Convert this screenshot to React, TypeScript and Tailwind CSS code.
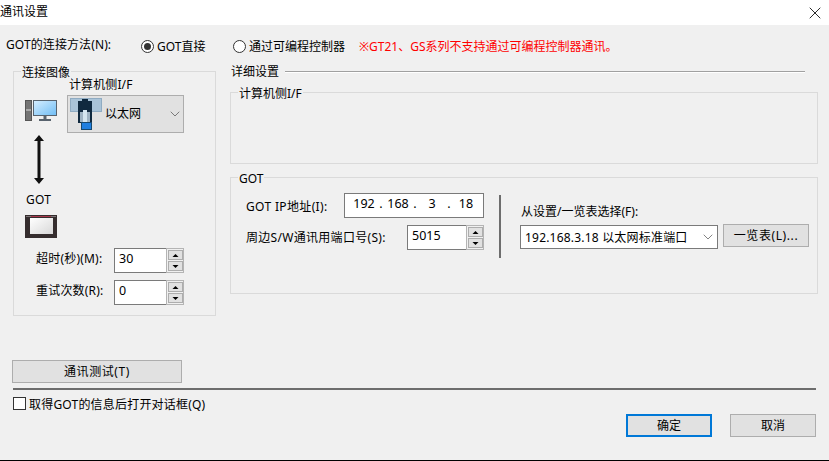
import { ChevronDown, X } from 'lucide-react'

function Radio({ checked }: { checked?: boolean }) {
  return (
    <span className="w-[13px] h-[13px] rounded-full border border-[#333333] bg-white flex items-center justify-center shrink-0">
      {checked && <span className="w-[7px] h-[7px] rounded-full bg-[#333333]" />}
    </span>
  )
}

function Group({ label, className, children }: { label: string; className: string; children?: React.ReactNode }) {
  return (
    <div className={`relative border border-[#dadada] ${className}`}>
      <span className="absolute left-[7px] top-[-6px] px-[1px] bg-[#f0f0f0] leading-[14px]">{label}</span>
      {children}
    </div>
  )
}

function Arrow({ up }: { up?: boolean }) {
  return (
    <svg width="9" height="5" viewBox="0 0 9 5">
      <path d={up ? 'M4.5 1L7.5 4H1.5Z' : 'M1.5 1H7.5L4.5 4Z'} fill="#000" />
    </svg>
  )
}

function Spin({ value, width }: { value: string; width: string }) {
  return (
    <div className={`flex h-[25px] shrink-0 ${width}`}>
      <div className="flex-1 bg-white border border-[#7a7a7a] border-r-0 pl-[4px] leading-[19px] text-[12.5px]">{value}</div>
      <div className="w-[18px] border border-[#b4b4b4] flex flex-col items-center justify-center gap-[1px]">
        <div className="w-[15px] h-[10px] bg-[#e1e1e1] border border-[#adadad] flex items-center justify-center"><Arrow up /></div>
        <div className="w-[15px] h-[10px] bg-[#e1e1e1] border border-[#adadad] flex items-center justify-center"><Arrow /></div>
      </div>
    </div>
  )
}

function Button({ children, className }: { children: React.ReactNode; className: string }) {
  return (
    <div className={`h-[23px] bg-[#e1e1e1] border border-[#adadad] flex items-center justify-center ${className}`}>
      {children}
    </div>
  )
}

function PcIcon() {
  return (
    <svg width="33" height="22" viewBox="0 0 33 22" className="block">
      <rect x="0.5" y="0.5" width="6" height="20" fill="#747474" stroke="#555" />
      <rect x="1" y="9.5" width="5" height="1" fill="#ddd" />
      <defs>
        <linearGradient id="scr" x1="0" y1="0" x2="1" y2="1">
          <stop offset="0" stopColor="#d6eeff" />
          <stop offset="1" stopColor="#6fbdf5" />
        </linearGradient>
      </defs>
      <rect x="8.5" y="0.5" width="23" height="15" fill="url(#scr)" stroke="#58636e" />
      <rect x="18.5" y="16" width="3" height="3" fill="#58636e" />
      <rect x="14" y="19" width="12" height="2" fill="#58636e" />
    </svg>
  )
}

function EthernetIcon() {
  return (
    <svg width="32" height="32" viewBox="0 0 32 32" className="block shrink-0">
      <rect x="0.5" y="0.5" width="31" height="13" fill="#a9c3d8" stroke="#8fabc2" />
      <rect x="8" y="3" width="14" height="11" fill="#10293f" />
      <rect x="12" y="1" width="6" height="3" fill="#10293f" />
      <rect x="8" y="14" width="14" height="11" fill="#10293f" />
      <rect x="10" y="14" width="10" height="10" fill="#9fb4c4" />
      <rect x="13" y="12" width="4" height="13" fill="#d5e6f0" />
      <rect x="11.5" y="24.5" width="10" height="7" fill="#1f7fe0" stroke="#17496f" />
    </svg>
  )
}

function GotIcon() {
  return (
    <svg width="32" height="23" viewBox="0 0 32 23" className="block">
      <rect width="32" height="23" fill="#352d2e" />
      <rect x="1" y="1" width="30" height="1" fill="#7d7577" />
      <rect x="6" y="1" width="20" height="1" fill="#a8364a" />
      <defs>
        <linearGradient id="gs" x1="0" y1="0" x2="1" y2="1">
          <stop offset="0" stopColor="#ffffff" />
          <stop offset="1" stopColor="#d8d8d8" />
        </linearGradient>
      </defs>
      <rect x="5" y="3" width="23" height="16" fill="url(#gs)" />
    </svg>
  )
}

export default function App() {
  return (
    <div className="w-[829px] h-[461px] flex flex-col bg-[#f0f0f0] overflow-hidden border-b border-black text-[12px] leading-[14px] text-black font-['Noto_Sans','Noto_Sans_CJK_SC',sans-serif]">
      <div className="h-[25px] bg-white flex items-center justify-between shrink-0">
        <span className="pb-[2px]">通讯设置</span>
        <X size={20} strokeWidth={1} className="mr-[4px]" />
      </div>

      <div className="h-[46px] flex items-center pl-[6px] pb-[4px] shrink-0">
        <span className="w-[135px] pb-[2px] tracking-[0.1px]">GOT的连接方法(N):</span>
        <Radio checked />
        <span className="ml-[3px] w-[76px] pt-[2px]">GOT直接</span>
        <Radio />
        <span className="ml-[3px] w-[110px] pt-[2px]">通过可编程控制器</span>
        <span className="text-[#ff0000] pt-[2px]">※GT21、GS系列不支持通过可编程控制器通讯。</span>
      </div>

      <div className="flex pl-[13px] gap-[14px] shrink-0">
        <Group label="连接图像" className="w-[203px] h-[245px] pl-[11px]">
          <div className="flex">
            <div className="pt-[28px]"><PcIcon /></div>
            <div className="ml-[9px] pt-[6px]">
              <div className="pl-[2px] h-[17px] tracking-[0.1px]">计算机侧I/F</div>
              <div className="w-[117px] h-[38px] bg-[#e1e1e1] border border-[#adadad] flex items-center pl-[2px]">
                <EthernetIcon />
                <span className="ml-[3px] flex-1">以太网</span>
                <ChevronDown size={16} strokeWidth={1} className="text-[#444444]" />
              </div>
            </div>
          </div>
          <svg width="10" height="49" viewBox="0 0 10 49" className="block ml-[9px] mt-[2px]">
            <path d="M5 0L10 6H0Z M5 49L0 43H10Z" fill="#111" />
            <rect x="3.5" y="5" width="3" height="39" fill="#111" />
          </svg>
          <div className="mt-[9px] h-[14px] leading-[14px] ml-px tracking-[0.3px]">GOT</div>
          <div className="mt-[8px]"><GotIcon /></div>
          <div className="mt-[10px] flex items-center pl-[11px]">
            <span className="w-[78px] pb-[4px] tracking-[0.2px]">超时(秒)(M):</span>
            <Spin value="30" width="w-[70px]" />
          </div>
          <div className="mt-[7px] flex items-center pl-[11px]">
            <span className="w-[78px] pb-[4px] tracking-[0.2px]">重试次数(R):</span>
            <Spin value="0" width="w-[70px]" />
          </div>
        </Group>

        <div className="w-[588px]">
          <div className="h-[14px] -mt-[6px] mb-[13px] flex items-center pl-[1px]">
            <span className="mr-[6px]">详细设置</span>
            <div className="w-[520px] h-[2px] bg-[#a0a0a0] border-b border-white -mt-px" />
          </div>
          <Group label="计算机侧I/F" className="h-[72px]" />
          <Group label="GOT" className="h-[117px] mt-[13px] flex pl-[15px] pt-[15px]">
            <div className="w-[238px]">
              <div className="flex items-center">
                <span className="w-[98px] pt-[3px] tracking-[0.35px]">GOT IP地址(I):</span>
                <div className="w-[140px] h-[25px] bg-white border border-[#7a7a7a] flex items-center pl-[5px] pb-[3px] text-[12.5px]">
                  <span className="w-[28px] text-center">192</span>
                  <span className="w-[6px] text-center">.</span>
                  <span className="w-[28px] text-center">168</span>
                  <span className="w-[6px] text-center">.</span>
                  <span className="w-[28px] text-center">3</span>
                  <span className="w-[6px] text-center">.</span>
                  <span className="w-[28px] text-center">18</span>
                </div>
              </div>
              <div className="flex items-center mt-[7px]">
                <span className="w-[161px] tracking-[0.3px]">周边S/W通讯用端口号(S):</span>
                <Spin value="5015" width="w-[77px]" />
              </div>
            </div>
            <div className="w-[2px] h-[63px] bg-[#6d6d6d] ml-[15px] mt-[2px]" />
            <div className="ml-[19px] w-[290px]">
              <div className="h-[32px] pt-[12px] pl-px">从设置/一览表选择(F):</div>
              <div className="flex items-start">
                <div className="w-[198px] h-[24px] bg-white border border-[#7a7a7a] flex items-center justify-between pl-[4px] pr-[1px]">
                  <span className="tracking-[0.2px] pt-[1px]">192.168.3.18 以太网标准端口</span>
                  <ChevronDown size={16} strokeWidth={1} className="text-[#444444]" />
                </div>
                <Button className="w-[86px] ml-[5px] -mt-px tracking-[0.6px]">一览表(L)...</Button>
              </div>
            </div>
          </Group>
        </div>
      </div>

      <div className="pl-[13px] shrink-0">
        <Button className="w-[170px] mt-[44px] -ml-px tracking-[0.6px]">通讯测试(T)</Button>
        <div className="w-[803px] h-[2px] bg-[#6d6d6d] mt-[5px]" />
        <div className="flex items-start mt-[7px] h-[15px]">
          <span className="w-[13px] h-[13px] border border-[#333333] bg-white" />
          <span className="ml-[3px] pt-[1px] tracking-[0.2px]">取得GOT的信息后打开对话框(Q)</span>
        </div>
        <div className="w-[803px] flex justify-end gap-[18px] mt-[2px]">
          <Button className="w-[86px] !border-2 !border-[#0078d7]">确定</Button>
          <Button className="w-[86px]">取消</Button>
        </div>
      </div>
    </div>
  )
}
